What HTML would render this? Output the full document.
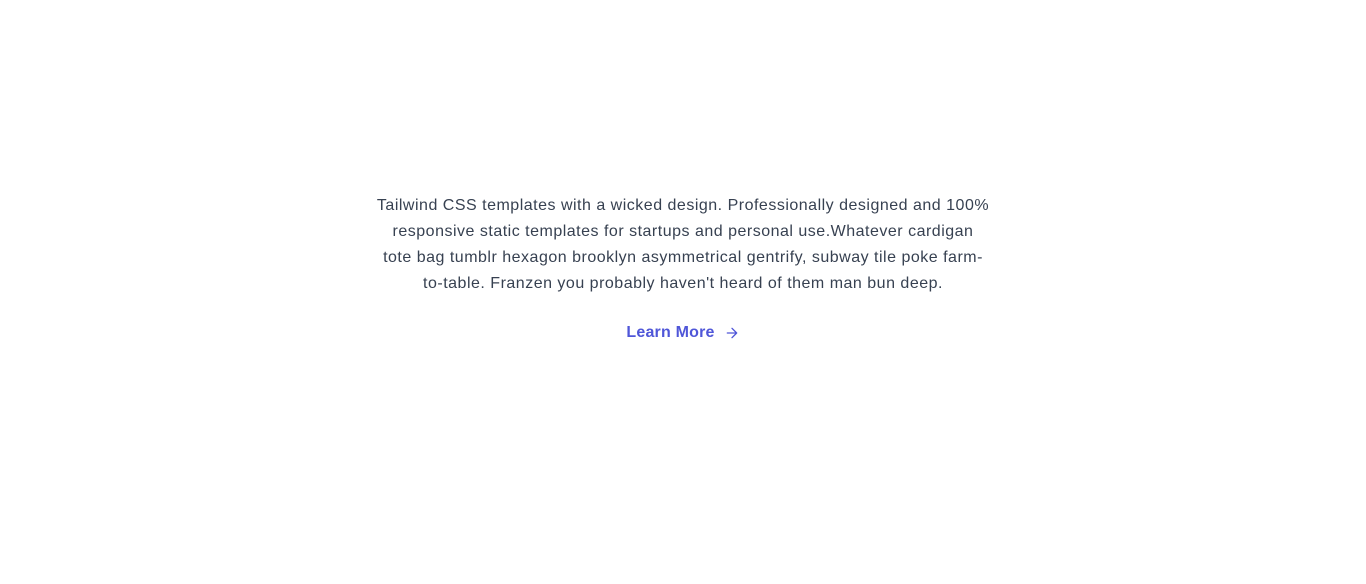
<!DOCTYPE html>
<html><head><meta charset="utf-8"><style>
html,body{margin:0;background:#fff;}
body{width:1366px;height:584px;overflow:hidden;font-family:"Liberation Sans",sans-serif;}
.wrap{width:700px;margin:0 auto;padding-top:193px;text-align:center;}
p{margin:0;font-size:16px;line-height:26px;color:#374151;white-space:nowrap;letter-spacing:0.5px;}
a{display:inline-flex;align-items:center;margin-top:24px;color:#4f56d8;font-weight:bold;font-size:16px;line-height:24px;text-decoration:none;letter-spacing:0.2px;}
a svg{margin-left:9px;}
</style></head><body>
<div class="wrap">
<p>Tailwind CSS templates with a wicked design. Professionally designed and 100%<br>responsive static templates for startups and personal use.Whatever cardigan<br>tote bag tumblr hexagon brooklyn asymmetrical gentrify, subway tile poke farm-<br>to-table. Franzen you probably haven't heard of them man bun deep.</p>
<a>Learn More<svg width="16" height="16" viewBox="0 0 24 24" fill="none" stroke="#4f56d8" stroke-width="2" stroke-linecap="round" stroke-linejoin="round"><path d="M5 12h14M12 5l7 7-7 7"/></svg></a>
</div>
</body></html>
